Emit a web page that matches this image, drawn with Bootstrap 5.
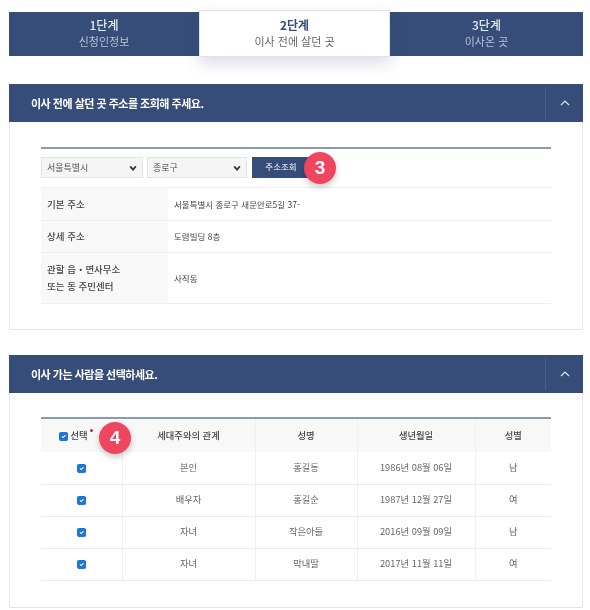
<!DOCTYPE html>
<html lang="ko">
<head>
<meta charset="utf-8">
<title>이사 전에 살던 곳</title>
<link href="https://cdn.jsdelivr.net/npm/bootstrap@5.3.0/dist/css/bootstrap.min.css" rel="stylesheet">
<style>
html,body{background:#fff}
body{font-family:"Noto Sans CJK KR","Noto Sans",sans-serif;color:#555;font-size:9px;padding:12px 7px 0 9px;width:590px;height:610px;overflow:hidden;filter:blur(.5px)}
.stepbar{background:#354d78;height:44px}
.stepitem{flex:1 1 0;color:#fff;text-align:center;line-height:1.3;padding-top:5px}
.stepfirst{flex:0 0 190px}
.stepitem b{display:block;font-size:12px;font-weight:500;color:#e4e8ef;line-height:16px}
.stepitem span{display:block;font-size:11px;color:#b7c2d4;line-height:16px}
.stepcur{flex:0 0 191px;background:#fff;color:#354d78;margin:-2px 0 -1px;border:1px solid #dfe3ea;box-shadow:0 6px 16px rgba(53,77,120,.2);padding-top:6px;z-index:2}
.stepcur b{color:#354d78;font-weight:700}
.stepcur span{color:#666}
.panelbox{border:1px solid #e5e5e5;border-top:0}
.panelhead{background:#354d78;height:38px;color:#fff;font-size:11px;font-weight:700;letter-spacing:-.5px;padding-left:22px;margin:0 -1px}
.panelchev{width:38px;height:32px;border-left:1px solid #45608c}
.gap1{margin-top:28px}
.gap2{margin-top:25px}
.inner1{padding:25px 31px 25px}
.topline{border-top:2px solid #8a9bb0}
.sel{width:102px;height:21px;font-size:9px;border:1px solid #e2e2e2;border-radius:0;background-color:#f5f5f5;color:#555;padding:0 14px 0 5px;background-image:url("data:image/svg+xml,%3csvg xmlns='http://www.w3.org/2000/svg' viewBox='0 0 10 10'%3e%3cpath d='M1.5 3l3.5 4 3.5-4' fill='none' stroke='%23333' stroke-width='2.2'/%3e%3c/svg%3e");background-size:8px 8px;background-position:right 5px center;line-height:1}
.sel2{width:100px}
.lookup{background:#354d78;color:#fff;font-size:8.5px;width:58px;height:21px;border:0;border-radius:0;padding:0 0 3px;margin-left:1px}
.marker{position:absolute;width:32px;height:32px;border-radius:50%;background:#f0455f;color:#fff;font-family:"Liberation Sans",sans-serif;font-size:19px;font-weight:700;display:flex;align-items:center;justify-content:center;box-shadow:0 3px 6px rgba(0,0,0,.22);z-index:3}
.m3{left:263px;top:-5px}
.m4{left:58px;top:3px}
.infotable{border-top:1px solid #eee;margin:9px 0 0;font-size:8.5px}
.infotable th,.infotable td{border-bottom:1px solid #efefef;padding:0 6px;vertical-align:middle;color:#444;font-weight:400}
.infotable th{background:#f8f8f8;width:127px;font-size:9.5px;color:#444;font-weight:500;line-height:17px}
.r1{height:33px}.r2{height:32px}.r3{height:51px}
.inner2{padding:24px 31px 26px}
.persontable{margin:0;text-align:center;table-layout:fixed;font-size:9.3px;position:relative}
.persontable th,.persontable td{padding:0;vertical-align:middle;border-bottom:1px solid #ececec;border-right:1px solid #f0f0f0;color:#666;font-weight:400;height:32px}
.persontable th{background:#f8f8f8;height:33px;font-weight:500;color:#444;border-bottom:0}
.persontable th:last-child,.persontable td:last-child{border-right:0}
.persontable th:first-child{padding-right:11px}
.form-check-input.tick{width:9px;height:9px;margin:0;border-radius:1.5px;background-color:#1f74dc;border-color:#1f74dc;vertical-align:middle;float:none}
.reddot{display:inline-block;width:3px;height:3px;background:#e21d2d;border-radius:50%;vertical-align:top;margin:0 0 0 2px}
</style>
</head>
<body>
<div class="stepbar d-flex">
  <div class="stepitem stepfirst"><b>1단계</b><span>신청인정보</span></div>
  <div class="stepitem stepcur"><b>2단계</b><span>이사 전에 살던 곳</span></div>
  <div class="stepitem"><b>3단계</b><span>이사온 곳</span></div>
</div>

<section class="gap1 panelbox">
  <div class="panelhead d-flex align-items-center justify-content-between">
    <span>이사 전에 살던 곳 주소를 조회해 주세요.</span>
    <span class="panelchev d-flex align-items-center justify-content-center"><svg width="10" height="6" viewBox="0 0 10 6"><path d="M1 5l4-4 4 4" fill="none" stroke="#dfe4ec" stroke-width="1.2"/></svg></span>
  </div>
  <div class="inner1">
    <div class="topline"></div>
    <div class="d-flex gap-1 mt-2 position-relative">
      <select class="form-select sel"><option>서울특별시</option></select>
      <select class="form-select sel sel2"><option>종로구</option></select>
      <button class="btn lookup" type="button">주소조회</button>
      <span class="marker m3">3</span>
    </div>
    <table class="table infotable">
      <tbody>
        <tr class="r1"><th>기본 주소</th><td>서울특별시 종로구 새문안로5길 37-</td></tr>
        <tr class="r2"><th>상세 주소</th><td>도렴빌딩 8층</td></tr>
        <tr class="r3"><th>관할 읍・면사무소<br>또는 동 주민센터</th><td>사직동</td></tr>
      </tbody>
    </table>
  </div>
</section>

<section class="gap2 panelbox">
  <div class="panelhead d-flex align-items-center justify-content-between">
    <span>이사 가는 사람을 선택하세요.</span>
    <span class="panelchev d-flex align-items-center justify-content-center"><svg width="10" height="6" viewBox="0 0 10 6"><path d="M1 5l4-4 4 4" fill="none" stroke="#dfe4ec" stroke-width="1.2"/></svg></span>
  </div>
  <div class="inner2">
    <div class="topline"></div>
    <div class="position-relative">
      <span class="marker m4">4</span>
      <table class="table persontable">
        <colgroup><col style="width:81px"><col style="width:133px"><col style="width:102px"><col style="width:118px"><col></colgroup>
        <thead>
          <tr><th><input class="form-check-input tick" type="checkbox" checked> 선택<i class="reddot"></i></th><th>세대주와의 관계</th><th>성명</th><th>생년월일</th><th>성별</th></tr>
        </thead>
        <tbody>
          <tr><td><input class="form-check-input tick" type="checkbox" checked></td><td>본인</td><td>홍길동</td><td>1986년 08월 06일</td><td>남</td></tr>
          <tr><td><input class="form-check-input tick" type="checkbox" checked></td><td>배우자</td><td>홍길순</td><td>1987년 12월 27일</td><td>여</td></tr>
          <tr><td><input class="form-check-input tick" type="checkbox" checked></td><td>자녀</td><td>작은아들</td><td>2016년 09월 09일</td><td>남</td></tr>
          <tr><td><input class="form-check-input tick" type="checkbox" checked></td><td>자녀</td><td>막내딸</td><td>2017년 11월 11일</td><td>여</td></tr>
        </tbody>
      </table>
    </div>
  </div>
</section>
<script src="https://cdn.jsdelivr.net/npm/bootstrap@5.3.0/dist/js/bootstrap.bundle.min.js"></script>
</body>
</html>
